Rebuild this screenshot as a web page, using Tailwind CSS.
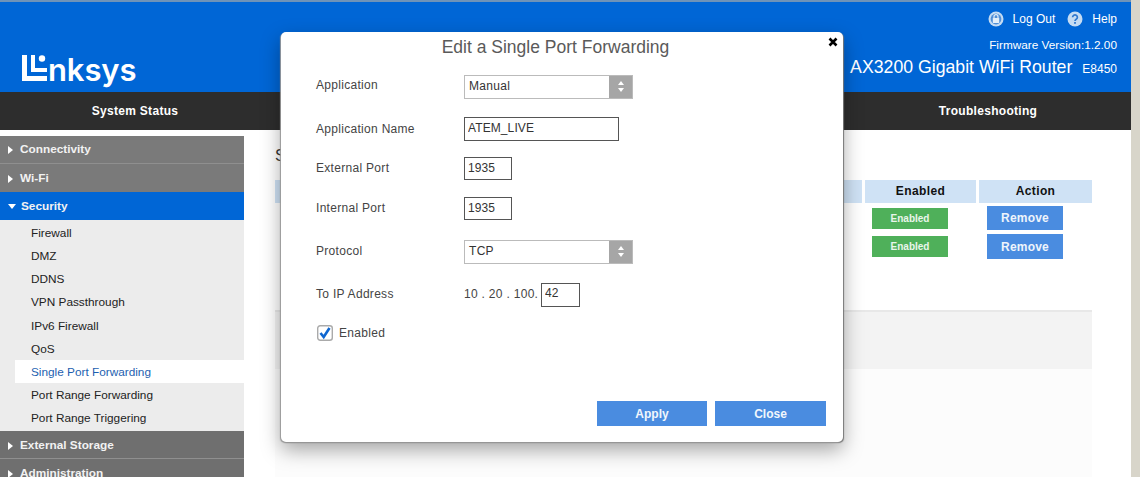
<!DOCTYPE html>
<html lang="en">
<head>
    <meta charset="UTF-8">
    <title>Linksys Smart Wi-Fi</title>
    <script src="https://cdn.jsdelivr.net/npm/@tailwindcss/browser@4"></script>
</head>
<body class="bg-white font-['Liberation_Sans',sans-serif]">
<div class="relative flex h-[477px] w-[1140px] overflow-hidden">
    <div class="w-[1131px] shrink-0">
        <!-- Header -->
        <div class="h-[2px] bg-[#6f93b8]"></div>
        <header class="flex h-[90px] justify-between bg-[#0066d6] pl-[22px] pr-[14px] text-white">
            <div class="flex items-start pt-[53px]">
                <svg width="26" height="28" viewBox="0 0 26 28" class="shrink-0">
                    <path d="M0 0h5v21h20v5H0z M9 0h4v13h12v4H9z" fill="#fff"/>
                    <circle cx="20" cy="3.5" r="3.2" fill="#fff"/>
                </svg>
                <span class="mt-[-4px] font-['Inter',sans-serif] text-[31px] font-semibold leading-[38px] tracking-[-0.1px]">nksys</span>
            </div>
            <div class="flex flex-col items-end pt-[9px]">
                <div class="flex h-[16px] items-center text-[12px]">
                    <svg width="16" height="16" viewBox="0 0 16 16">
                        <circle cx="8" cy="8" r="7.5" fill="#c5dcf3"/>
                        <circle cx="8" cy="8" r="5.4" fill="#4f8fd8"/>
                        <rect x="4.8" y="7" width="6.4" height="5" rx="0.6" fill="#e4eff9"/>
                        <path d="M6 7V5.7a2 2 0 0 1 4 0V7" fill="none" stroke="#e4eff9" stroke-width="1.2"/>
                    </svg>
                    <span class="ml-[9px]">Log Out</span>
                    <svg width="16" height="16" viewBox="0 0 16 16" class="ml-[12px]">
                        <circle cx="8" cy="8" r="7.5" fill="#c5dcf3"/>
                        <path d="M5.6 6.2a2.4 2.3 0 1 1 3.6 2c-.8.5-1.2.9-1.2 1.8" fill="none" stroke="#2f78cf" stroke-width="1.7"/>
                        <rect x="7.1" y="11" width="1.8" height="1.8" fill="#2f78cf"/>
                    </svg>
                    <span class="ml-[9px]">Help</span>
                </div>
                <div class="mt-[10px] text-[11.8px] leading-[16px]">Firmware Version:1.2.00</div>
                <div class="mt-[3px] flex items-baseline leading-[22px]">
                    <span class="text-[17.7px]">AX3200 Gigabit WiFi Router</span>
                    <span class="ml-[10px] text-[12px]">E8450</span>
                </div>
            </div>
        </header>
        <nav class="flex h-[38px] items-center justify-between bg-[#2d2d2d] text-[12px] font-bold tracking-[0.3px] text-white">
            <div class="w-[270px] text-center">System Status</div>
            <div class="w-[286px] text-center">Troubleshooting</div>
        </nav>

        <div class="mt-[6px] flex">
            <!-- Sidebar -->
            <aside class="w-[244px] shrink-0 text-[11.8px]">
                <div class="flex h-[28px] items-center border-b border-[#8f8f8f] bg-[#7a7a7a] pl-[8px] font-bold text-[#f2f2f2]">
                    <span class="mr-[7px] h-0 w-0 border-y-[4px] border-l-[5px] border-y-transparent border-l-white"></span>Connectivity
                </div>
                <div class="flex h-[28px] items-center bg-[#7a7a7a] pl-[8px] pt-[1px] font-bold text-[#f2f2f2]">
                    <span class="mr-[7px] h-0 w-0 border-y-[4px] border-l-[5px] border-y-transparent border-l-white"></span>Wi-Fi
                </div>
                <div class="flex h-[28px] items-center bg-[#0066d6] pl-[8px] pt-[1px] font-bold text-[#f2f2f2]">
                    <span class="mr-[5px] h-0 w-0 border-x-[4px] border-t-[5px] border-x-transparent border-t-white"></span>Security
                </div>
                <ul class="h-[211px] bg-[#ececec] pt-[1px] text-[#222] [&>li]:flex [&>li]:h-[23.2px] [&>li]:items-center [&>li]:pt-[2px]">
                    <li class="pl-[31px]">Firewall</li>
                    <li class="pl-[31px]">DMZ</li>
                    <li class="pl-[31px]">DDNS</li>
                    <li class="pl-[31px]">VPN Passthrough</li>
                    <li class="pl-[31px]">IPv6 Firewall</li>
                    <li class="pl-[31px]">QoS</li>
                    <li class="ml-[15px] bg-white pl-[16px] text-[#1d5fb0]">Single Port Forwarding</li>
                    <li class="pl-[31px]">Port Range Forwarding</li>
                    <li class="pl-[31px]">Port Range Triggering</li>
                </ul>
                <div class="flex h-[28px] items-center border-b border-[#8f8f8f] bg-[#6f6f6f] pl-[8px] pt-[2px] font-bold text-[#f2f2f2]">
                    <span class="mr-[7px] h-0 w-0 border-y-[4px] border-l-[5px] border-y-transparent border-l-white"></span>External Storage
                </div>
                <div class="flex h-[28px] items-center bg-[#6f6f6f] pl-[8px] pt-[2px] font-bold text-[#f2f2f2]">
                    <span class="mr-[7px] h-0 w-0 border-y-[4px] border-l-[5px] border-y-transparent border-l-white"></span>Administration
                </div>
            </aside>

            <!-- Page behind the dialog -->
            <main class="ml-[31px] w-[817px]">
                <h2 class="mt-[10px] h-[34px] text-[16px] leading-[20px] text-[#333]">Single Port Forwarding</h2>
                <div class="flex h-[23px] items-center gap-[3px] text-center text-[12px] font-bold tracking-[0.4px] text-[#111]">
                    <div class="h-full flex-1 bg-[#cfe2f5]"></div>
                    <div class="flex h-full w-[111px] items-center justify-center bg-[#cfe2f5] pb-[2px]">Enabled</div>
                    <div class="flex h-full w-[113px] items-center justify-center bg-[#cfe2f5] pb-[2px]">Action</div>
                </div>
                <div class="mt-[3px] flex items-center justify-end">
                    <div class="flex h-[21px] w-[76px] items-center justify-center bg-[#4fb05a] text-[10px] font-bold text-[#e9f5ea]">Enabled</div>
                    <div class="ml-[39px] mr-[29px] flex h-[24px] w-[76px] items-center justify-center bg-[#4a8ce0] text-[12px] font-bold tracking-[0.2px] text-[#eef4fb]">Remove</div>
                </div>
                <div class="mt-[4px] flex items-center justify-end">
                    <div class="flex h-[21px] w-[76px] items-center justify-center bg-[#4fb05a] text-[10px] font-bold text-[#e9f5ea]">Enabled</div>
                    <div class="ml-[39px] mr-[29px] flex h-[25px] w-[76px] items-center justify-center bg-[#4a8ce0] text-[12px] font-bold tracking-[0.2px] text-[#eef4fb]">Remove</div>
                </div>
                <div class="mt-[51px] h-[59px] border-t-2 border-[#e8e8e8] bg-[#f3f3f3]"></div>
                <div class="h-[108px] bg-[#fcfcfc]"></div>
            </main>
        </div>
    </div>
    <div class="w-[9px] bg-[#d8d5ca]"></div>

    <!-- Dialog -->
    <div class="absolute left-[281px] top-[32px] h-[410px] w-[562px] rounded-[5px] bg-white px-[35px] text-[12px] tracking-[0.3px] text-[#444] shadow-[-1px_1px_1px_#999,1px_1px_1px_#777,0_8px_20px_rgba(0,0,0,0.35)]">
        <h3 class="pr-[13px] pt-[5px] text-center text-[17.5px] leading-[20px] tracking-normal text-[#5a5a5a]">Edit a Single Port Forwarding</h3>
        <svg width="10" height="10" viewBox="0 0 10 10" class="absolute right-[5px] top-[5px]">
            <path d="M1.5 1.5l7 7M8.5 1.5l-7 7" stroke="#000" stroke-width="2.6"/>
        </svg>

        <div class="mt-[18px] flex h-[23px] items-center">
            <label class="mt-[-3px] w-[148px]">Application</label>
            <div class="flex h-[24px] w-[169px] border border-[#bbb] text-[#333]">
                <span class="flex flex-1 items-center pb-[2px] pl-[4px]">Manual</span>
                <span class="flex w-[23px] flex-col items-center justify-center gap-[3px] bg-[#a6a6a6]">
                    <span class="h-0 w-0 border-x-[3.5px] border-b-[4px] border-x-transparent border-b-white"></span>
                    <span class="h-0 w-0 border-x-[3.5px] border-t-[4px] border-x-transparent border-t-white"></span>
                </span>
            </div>
        </div>
        <div class="mt-[19px] flex h-[24px] items-center">
            <label class="w-[148px]">Application Name</label>
            <input value="ATEM_LIVE" class="h-[24px] w-[155px] border border-[#555] pb-[2px] pl-[3px] tracking-[0.1px] text-[#333] outline-none">
        </div>
        <div class="mt-[16px] flex h-[23px] items-center">
            <label class="mt-[-2px] w-[148px]">External Port</label>
            <input value="1935" class="h-[23px] w-[48px] border border-[#555] pb-[2px] pl-[3px] tracking-[0.1px] text-[#333] outline-none">
        </div>
        <div class="mt-[17px] flex h-[23px] items-center">
            <label class="mt-[-2px] w-[148px]">Internal Port</label>
            <input value="1935" class="h-[23px] w-[48px] border border-[#555] pb-[2px] pl-[3px] tracking-[0.1px] text-[#333] outline-none">
        </div>
        <div class="mt-[20px] flex h-[23px] items-center">
            <label class="mt-[-1px] w-[148px]">Protocol</label>
            <div class="flex h-[24px] w-[169px] border border-[#bbb] text-[#333]">
                <span class="flex flex-1 items-center pb-[2px] pl-[4px]">TCP</span>
                <span class="flex w-[23px] flex-col items-center justify-center gap-[3px] bg-[#a6a6a6]">
                    <span class="h-0 w-0 border-x-[3.5px] border-b-[4px] border-x-transparent border-b-white"></span>
                    <span class="h-0 w-0 border-x-[3.5px] border-t-[4px] border-x-transparent border-t-white"></span>
                </span>
            </div>
        </div>
        <div class="mt-[20px] flex h-[23px] items-center">
            <label class="mt-[-2px] w-[148px]">To IP Address</label>
            <span class="mt-[-2px] w-[77px] whitespace-nowrap">10 . 20 . 100.</span>
            <input value="42" class="h-[24px] w-[39px] border border-[#555] pb-[3px] pl-[3px] tracking-[0.1px] text-[#333] outline-none">
        </div>
        <div class="mt-[19px] flex h-[16px] items-center">
            <svg width="16" height="16" viewBox="0 0 16 16" class="ml-[1px]">
                <rect x="0.7" y="0.7" width="14.6" height="14.6" rx="2.5" fill="#fff" stroke="#aaa" stroke-width="1.4"/>
                <path d="M3.5 8l3.2 4L12.5 3" fill="none" stroke="#0f66d0" stroke-width="2.6"/>
            </svg>
            <label class="ml-[6px] mt-[-1px]">Enabled</label>
        </div>

        <div class="absolute bottom-[16px] right-[17px] flex gap-[8px] text-[12px] font-bold tracking-normal text-[#f1f6fc]">
            <button class="h-[25px] w-[110px] bg-[#4a8ce0]">Apply</button>
            <button class="h-[25px] w-[111px] bg-[#4a8ce0]">Close</button>
        </div>
    </div>
</div>
</body>
</html>
